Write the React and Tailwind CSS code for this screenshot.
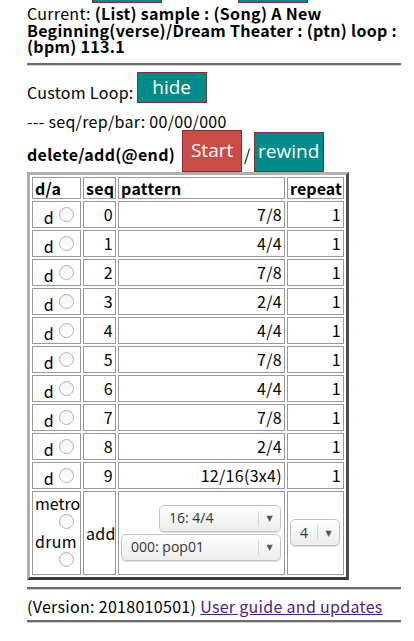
import { useState } from "react";

const rows = [
  { seq: 0, pattern: "7/8", repeat: 1 },
  { seq: 1, pattern: "4/4", repeat: 1 },
  { seq: 2, pattern: "7/8", repeat: 1 },
  { seq: 3, pattern: "2/4", repeat: 1 },
  { seq: 4, pattern: "4/4", repeat: 1 },
  { seq: 5, pattern: "7/8", repeat: 1 },
  { seq: 6, pattern: "4/4", repeat: 1 },
  { seq: 7, pattern: "7/8", repeat: 1 },
  { seq: 8, pattern: "2/4", repeat: 1 },
  { seq: 9, pattern: "12/16(3x4)", repeat: 1 },
];

const Radio = () => (
  <span className="inline-block w-[15px] h-[15px] rounded-full border border-[#b0b0b0] bg-gradient-to-b from-[#f2f2f2] to-white align-[-1px] ml-[5px] mr-[4px]" />
);

const Select = ({ label, width }) => (
  <div
    className={`inline-flex items-center h-[27px] ${width} rounded-[5px] border border-[#c4c4c4] bg-gradient-to-b from-white to-[#ececec] text-[14px] text-[#333] tracking-normal shadow-[0_1px_0_#ddd]`}
    style={{ fontFamily: '"Open Sans", "DejaVu Sans", sans-serif' }}
  >
    <span className="flex-1 text-left pl-[9px] leading-none">{label}</span>
    <span className="w-px h-[15px] bg-[#d4d4d4]" />
    <span className="w-[21px] text-center text-[8px] text-[#555] leading-none">▼</span>
  </div>
);

const cell = "border border-[#9a9a9a] px-[2px] overflow-hidden";
const btnFont = { fontFamily: '"Open Sans", "DejaVu Sans", sans-serif' };

export default function App() {
  const [choice] = useState(null);

  return (
    <div
      className="pl-[27px] pr-[13px] text-[16px] tracking-[0.3px] text-black bg-white min-h-[641px]"
      style={{ fontFamily: '"Noto Sans CJK JP", "Noto Sans", sans-serif' }}
    >
      <div className="flex items-end h-[3px]">
        <div className="shrink-0 ml-[65px] w-[70px] h-[30px] bg-[#008b8b] border border-[#8b2b2b]" />
        <div className="shrink-0 ml-[76px] w-[70px] h-[30px] bg-[#008b8b] border border-[#8b2b2b]" />
      </div>

      <p className="mt-[2px] leading-[16.5px]">
        Current: <b>(List) sample : (Song) A New Beginning(verse)/Dream Theater : (ptn) loop : (bpm) 113.1</b>
      </p>

      <div className="mt-[8px] border-t-[2px] border-t-[#6b6b6b] border-b border-b-[#d0d0d0]" />

      <div className="mt-[5px] flex items-end h-[32px]">
        <span className="leading-[20px] mb-[1px]">Custom Loop:</span>
        <button
          className="ml-[3px] w-[70px] h-[31px] bg-[#008b8b] border border-[#8b2b2b] text-white text-[19px] tracking-normal leading-none"
          style={btnFont}
        >
          hide
        </button>
      </div>

      <div className="mt-[9px] leading-[18px]">--- seq/rep/bar: 00/00/000</div>

      <div className="flex items-end h-[42px]">
        <b className="leading-[20px] mb-[8px]">delete/add(@end)</b>
        <button
          className="ml-[7px] w-[60px] h-[42px] bg-[#cb4d48] border border-[#8b2b2b] text-white text-[19px] tracking-normal leading-none"
          style={btnFont}
        >
          Start
        </button>
        <span className="ml-[2px] mr-[3px] mb-[8px] leading-[20px]">/</span>
        <button
          className="w-[70px] h-[40px] bg-[#008b8b] border border-[#8b2b2b] text-white text-[19px] tracking-normal leading-none"
          style={btnFont}
        >
          rewind
        </button>
      </div>

      <table className="table-fixed border-separate border-spacing-[2px] border-[3px] border-t-[#b0b0b0] border-l-[#b0b0b0] border-r-[#4a4a4a] border-b-[#3a3a3a] w-[322px] leading-[20px]">
        <colgroup>
          <col className="w-[49px]" />
          <col className="w-[33px]" />
          <col className="w-[167px]" />
          <col className="w-[57px]" />
        </colgroup>
        <thead>
          <tr className="h-[22px]">
            <th className={`${cell} text-left font-bold`}>d/a</th>
            <th className={`${cell} text-left font-bold`}>seq</th>
            <th className={`${cell} text-left font-bold`}>pattern</th>
            <th className={`${cell} text-left font-bold px-[1px] tracking-[0.1px]`}>repeat</th>
          </tr>
        </thead>
        <tbody>
          {rows.map((r) => (
            <tr key={r.seq} className="h-[27px]">
              <td className={`${cell} text-right`}>
                <span className="relative top-[3px]">d</span>
                <Radio />
              </td>
              <td className={`${cell} text-right`}>{r.seq}</td>
              <td className={`${cell} text-right`}>{r.pattern}</td>
              <td className={`${cell} text-right`}>{r.repeat}</td>
            </tr>
          ))}
          <tr className="h-[84px]">
            <td className={`${cell} text-right align-top px-0`}>
              <div className="leading-[18px] pt-[2px] tracking-normal">metro</div>
              <div className="flex justify-end h-[20px] items-center"><Radio /></div>
              <div className="leading-[18px] mr-[2px]">drum</div>
              <div className="flex justify-end h-[20px] items-center">{choice}<Radio /></div>
            </td>
            <td className={`${cell} text-left`}>add</td>
            <td className={`${cell}`}>
              <div className="flex flex-col items-end gap-[2px] pr-px">
                <Select label="16: 4/4" width="w-[122px]" />
                <Select label="000: pop01" width="w-[160px]" />
              </div>
            </td>
            <td className={`${cell}`}>
              <Select label="4" width="w-[50px]" />
            </td>
          </tr>
        </tbody>
      </table>

      <div className="mt-[7px] border-t-[2px] border-t-[#6b6b6b] border-b border-b-[#d0d0d0]" />

      <div className="mt-[6px] leading-[20px]">
        (Version: 2018010501){" "}
        <a href="#" className="text-[#551a8b] underline">User guide and updates</a>
      </div>

      <div className="mt-[4px] border-t-[2px] border-t-[#6b6b6b] border-b border-b-[#d0d0d0]" />
    </div>
  );
}
